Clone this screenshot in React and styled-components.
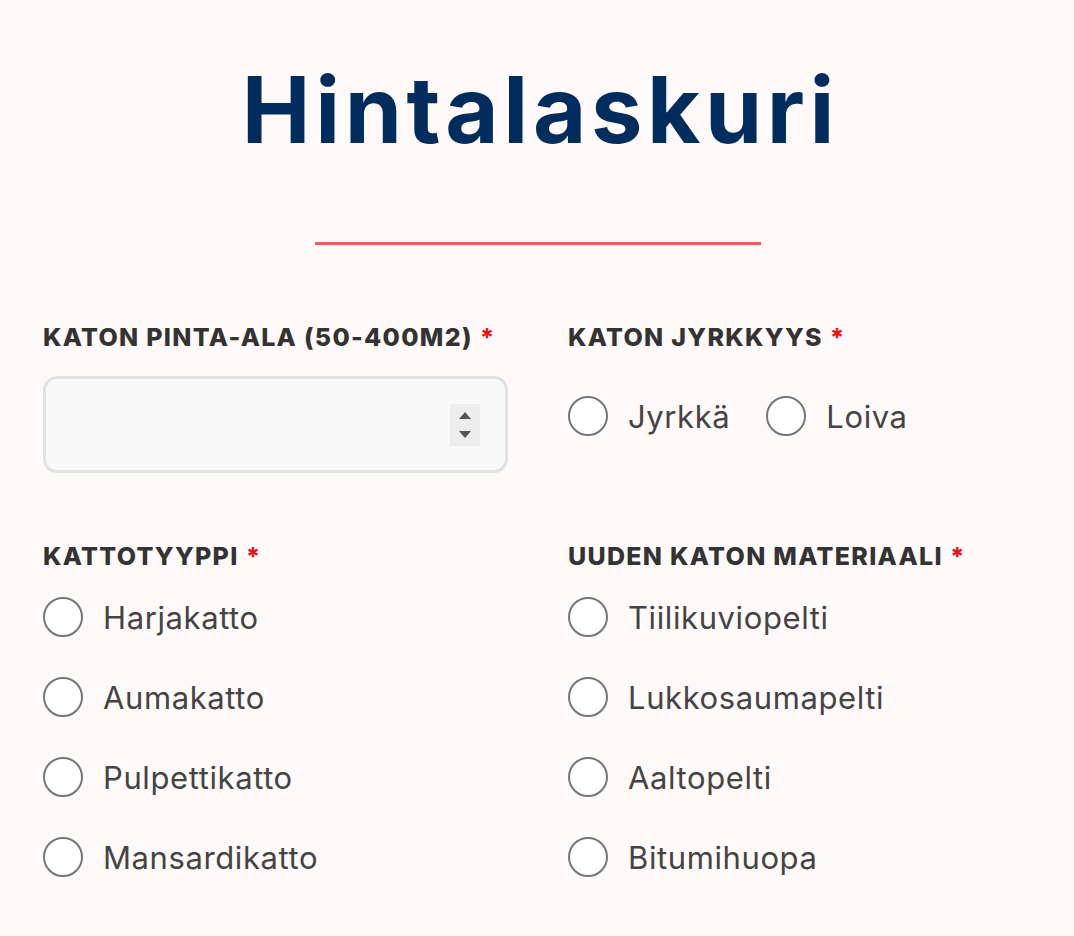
import React from "react";
import styled, { createGlobalStyle } from "styled-components";

const Global = createGlobalStyle`
  html, body { margin: 0; padding: 0; background: #fffaf9; }
  body { font-family: Inter, "Noto Sans", sans-serif; }
  * { box-sizing: border-box; }
`;

const Page = styled.div`
  width: 1074px;
  min-height: 936px;
  padding: 0 41px 0 43px;
  display: flex;
  flex-direction: column;
  align-items: center;
`;

const Title = styled.h1`
  margin: 64px 0 0;
  padding-left: 5px;
  font-family: Inter, sans-serif;
  font-weight: 700;
  font-size: 92px;
  line-height: 92px;
  color: #002c5e;
  letter-spacing: 4.6px;
`;

const Divider = styled.div`
  margin-top: 86px;
  width: 446px;
  height: 3px;
  background: #ef5e5a;
`;

const Form = styled.div`
  margin-top: 77px;
  width: 100%;
  display: grid;
  grid-template-columns: minmax(0, 465px) minmax(0, 465px);
  column-gap: 60px;
  row-gap: 68px;
`;

const Field = styled.div`
  display: flex;
  flex-direction: column;
  min-width: 0;
`;

const Label = styled.div`
  font-family: Inter, sans-serif;
  font-weight: 800;
  font-size: 25px;
  line-height: 30px;
  letter-spacing: 1.3px;
  text-transform: uppercase;
  color: #333333;
  white-space: nowrap;
`;

const Req = styled.span`
  color: #e3161b;
  margin-left: 7px;
`;

const InputBox = styled.div`
  margin-top: 24px;
  height: 97px;
  border: 3px solid #e2e2e2;
  border-radius: 14px;
  background: #f9f9f9;
  display: flex;
  align-items: center;
  padding: 0 25px 0 20px;
`;

const TextInput = styled.input`
  flex: 1;
  min-width: 0;
  width: 0;
  border: none;
  background: transparent;
  outline: none;
  font-family: Inter, sans-serif;
  font-size: 28px;
  color: #444;
`;

const Spinner = styled.div`
  width: 30px;
  height: 42px;
  background: #ededed;
  display: flex;
  flex-direction: column;
  align-items: center;
  justify-content: center;
  gap: 12px;
`;

const Arrow = styled.div`
  width: 0;
  height: 0;
  border-left: 6px solid transparent;
  border-right: 6px solid transparent;
  ${(p) =>
    p.$down
      ? "border-top: 7px solid #555;"
      : "border-bottom: 7px solid #555;"}
`;

const InlineOptions = styled.div`
  margin-top: 44px;
  display: flex;
  gap: 36px;
`;

const StackOptions = styled.div`
  margin-top: 26px;
  display: flex;
  flex-direction: column;
  gap: 40px;
`;

const Option = styled.label`
  display: flex;
  align-items: center;
  gap: 20px;
  height: 40px;
  font-family: Inter, sans-serif;
  font-size: 31px;
  letter-spacing: 0.6px;
  color: #444444;
  cursor: pointer;
`;

const Circle = styled.span`
  width: 40px;
  height: 40px;
  border-radius: 50%;
  border: 2px solid #767676;
  background: #ffffff;
  flex-shrink: 0;
`;

const Radio = ({ children }) => (
  <Option>
    <Circle />
    {children}
  </Option>
);

export default function App() {
  return (
    <>
      <Global />
      <Page>
        <Title>Hintalaskuri</Title>
        <Divider />
        <Form>
          <Field>
            <Label>
              Katon pinta-ala (50-400m2)<Req>*</Req>
            </Label>
            <InputBox>
              <TextInput type="text" aria-label="Katon pinta-ala" />
              <Spinner>
                <Arrow />
                <Arrow $down />
              </Spinner>
            </InputBox>
          </Field>
          <Field>
            <Label>
              Katon jyrkkyys<Req>*</Req>
            </Label>
            <InlineOptions>
              <Radio>Jyrkkä</Radio>
              <Radio>Loiva</Radio>
            </InlineOptions>
          </Field>
          <Field>
            <Label>
              Kattotyyppi<Req>*</Req>
            </Label>
            <StackOptions>
              <Radio>Harjakatto</Radio>
              <Radio>Aumakatto</Radio>
              <Radio>Pulpettikatto</Radio>
              <Radio>Mansardikatto</Radio>
            </StackOptions>
          </Field>
          <Field>
            <Label>
              Uuden katon materiaali<Req>*</Req>
            </Label>
            <StackOptions>
              <Radio>Tiilikuviopelti</Radio>
              <Radio>Lukkosaumapelti</Radio>
              <Radio>Aaltopelti</Radio>
              <Radio>Bitumihuopa</Radio>
            </StackOptions>
          </Field>
        </Form>
      </Page>
    </>
  );
}
